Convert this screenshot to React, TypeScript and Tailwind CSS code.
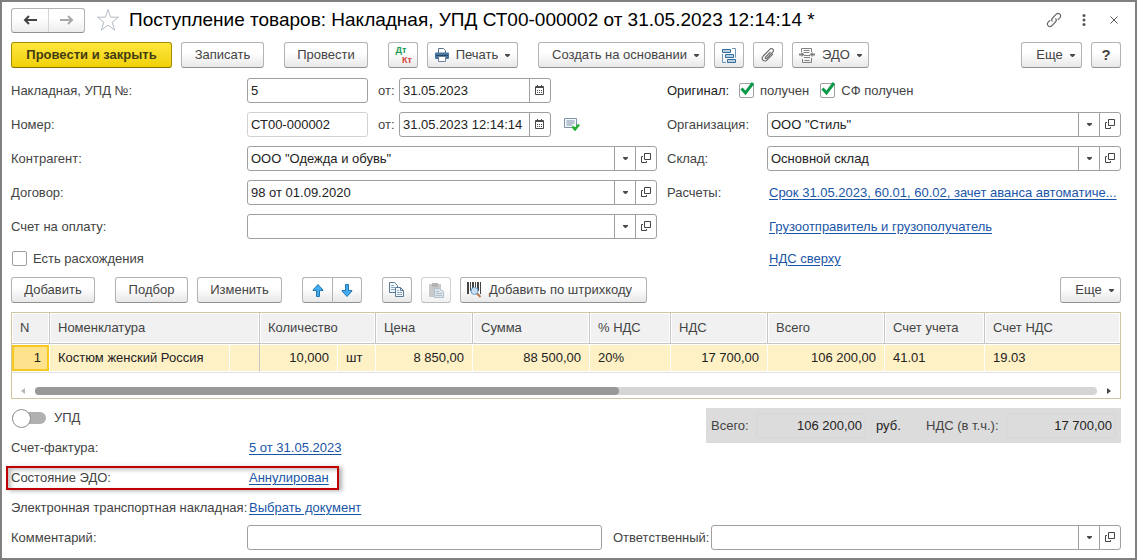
import { useState, type ReactNode } from 'react';
import { clsx } from 'clsx';

const LINK = 'text-[#1a56a8] underline underline-offset-2 whitespace-nowrap';

function Caret() {
  return (
    <svg width="5" height="3" viewBox="0 0 5 3" fill="#4a4a4a" aria-hidden="true" className="shrink-0">
      <path d="M0 0h5v1L3 3H2L0 1z" />
    </svg>
  );
}

function OpenIcon() {
  return (
    <svg width="10" height="10" viewBox="0 0 10 10" fill="none" stroke="#444" aria-hidden="true">
      <path d="M3.5 0.5h6v6h-6z M2 3.5H0.5v6h5V8" />
    </svg>
  );
}

function CalendarIcon() {
  return (
    <svg width="10" height="10" viewBox="0 0 10 10" fill="none" stroke="#4a4a4a" aria-hidden="true">
      <path d="M0.5 1.5h8v8h-8z M0 2.5h9" />
      <path d="M2.5 0v2 M6.5 0v2" />
      <path d="M2 5.5h1m1 0h1m1 0h1 M2 7.5h1m1 0h1m1 0h1" />
    </svg>
  );
}

function StarIcon() {
  return (
    <svg width="24" height="24" viewBox="0 0 24 24" fill="#fff" stroke="#b4bcc6" aria-hidden="true">
      <path d="M12 1.5l2.6 7.7h8l-6.4 4.9 2.4 7.9L12 17.2l-6.6 4.8 2.4-7.9L1.4 9.2h8z" />
    </svg>
  );
}

function NavArrow({ back }: { back?: boolean }) {
  return (
    <svg width="15" height="10" viewBox="0 0 15 10" fill="none" aria-hidden="true" stroke={back ? '#444' : '#a8a8a8'} strokeWidth="2">
      <path d={back ? 'M14 5H2 M6 1L2 5l4 4' : 'M1 5h12 M9 1l4 4-4 4'} />
    </svg>
  );
}

function LinkIcon() {
  return (
    <svg width="16" height="16" viewBox="0 0 16 16" fill="none" stroke="#666" strokeWidth="1.2" aria-hidden="true">
      <path d="M6.5 9.5C5.5 8.5 5.6 7 6.6 6l3.6-3.8c1.1-1 2.6-1 3.6 0s1 2.5 0 3.6l-2 2" />
      <path d="M9.5 6.5c1 1 .9 2.5-.1 3.5l-3.6 3.8c-1.1 1-2.6 1-3.6 0s-1-2.5 0-3.6l2-2" />
    </svg>
  );
}

function PrintIcon() {
  return (
    <svg width="14" height="14" viewBox="0 0 14 14" aria-hidden="true" className="shrink-0">
      <path d="M3.5 5V.5h5l2 2V5" fill="#fff" stroke="#5a6f86" />
      <path d="M1 4.5h12a1 1 0 011 1V10a1 1 0 01-1 1H1a1 1 0 01-1-1V5.5a1 1 0 011-1z" fill="#47759f" />
      <path d="M1 7.5h12" stroke="#24496d" />
      <path d="M3.5 8.5h7v5h-7z" fill="#fff" stroke="#6f8297" />
    </svg>
  );
}

function StructureIcon() {
  return (
    <svg width="14" height="15" viewBox="0 0 14 15" fill="none" stroke="#356d9a" aria-hidden="true">
      <path d="M.5 1.5h8v3h-8z M3.5 6.5h8v3h-8z M5.5 11.5h8v3h-8z" fill="#b6d1e6" />
      <path d="M10 .5h3.5v9 M.5 6v8.5H4" stroke="#6a95b8" />
    </svg>
  );
}

function ClipIcon() {
  return (
    <svg width="14" height="14" viewBox="0 0 14 14" fill="none" stroke="#666" strokeWidth="1.1" aria-hidden="true">
      <path d="M9.5 4L4.5 9.2c-.8.9.4 2 1.2 1.2l6-6.2c2-2.3-.8-4.8-2.9-2.9L2.2 8c-2.8 3.1 1 6.6 3.9 3.9l5.9-6" />
    </svg>
  );
}

function EdoIcon() {
  return (
    <svg width="16" height="15" viewBox="0 0 16 15" fill="none" stroke="#808080" aria-hidden="true" className="shrink-0">
      <path d="M2.5 4V.5h10V4 M3.5 11v3.5h9V10" />
      <path d="M4.5 2.5h6 M4.5 4.5h6 M5 7.5h6 M5 9.5h6 M5.5 12.5h5" />
      <path d="M0 6.5h4 M16 6.5h-4" strokeWidth="2" />
      <path d="M2.5 4v5l3-2.5z M13.5 4v5l-3-2.5z" fill="#808080" stroke="none" />
    </svg>
  );
}

function MoveArrow({ down }: { down?: boolean }) {
  return (
    <svg width="12" height="13" viewBox="0 0 12 13" fill="#41aaf0" stroke="#2477ad" aria-hidden="true">
      <path d={down ? 'M4.5.5h3v6H11v.5l-5 5.5L1 7v-.5h3.5z' : 'M4.5 12.5h3v-6H11V6L6 .5 1 6v.5h3.5z'} />
    </svg>
  );
}

function CopyIcon() {
  return (
    <svg width="16" height="16" viewBox="0 0 16 16" fill="#f3f8fc" stroke="#5b7893" aria-hidden="true">
      <path d="M.5.5h5l3 3v7h-8z" />
      <path d="M2 3.5h3 M2 5.5h4 M2 7.5h4" stroke="#8ea7bd" />
      <path d="M6.5 5.5h5l3 3v6h-8z" />
      <path d="M11.5 5.5v3h3" fill="none" />
      <path d="M8 8.5h2 M8 10.5h5 M8 12.5h5" stroke="#8ea7bd" />
    </svg>
  );
}

function PasteIcon() {
  return (
    <svg width="15" height="15" viewBox="0 0 15 15" aria-hidden="true">
      <path d="M0 1h12v13H0z" fill="#a6a6a6" />
      <path d="M3 0h6v4H3z" fill="#808080" />
      <path d="M5.5 5.5h5l4 3v6h-9z" fill="#c6d2dc" stroke="#7f97ab" />
      <path d="M7 8.5h3 M7 10.5h6 M7 12.5h6" stroke="#7f97ab" />
    </svg>
  );
}

function BarcodeIcon() {
  return (
    <svg width="15" height="16" viewBox="0 0 15 16" aria-hidden="true" className="shrink-0">
      <path d="M0 0h2v12H0z M3 0h1v9H3z M5 0h2v9H5z M8 0h1v9H8z M10 0h2v9h-2z M13 0h1v12h-1z" fill="#444" />
      <circle cx="7.5" cy="9" r="3.5" fill="#c7e0f6" stroke="#6a9dc9" />
      <path d="M10 11.5l3.5 3.5" stroke="#b9764a" strokeWidth="2" />
    </svg>
  );
}

function PostedIcon() {
  return (
    <svg width="16" height="13" viewBox="0 0 16 13" fill="none" aria-hidden="true">
      <path d="M.5.5h12v9H.5z" fill="#f4f8fb" stroke="#7c93aa" />
      <path d="M2.5 3h8 M2.5 5h8 M2.5 7h6" stroke="#7c93aa" />
      <path d="M8.5 8.5l2.5 3 4-5" stroke="#25b034" strokeWidth="2.5" />
    </svg>
  );
}

type ButtonProps = { className?: string; label?: string; primary?: boolean; disabled?: boolean; children: ReactNode };

function Button({ className, label, primary, disabled, children }: ButtonProps) {
  return (
    <button
      type="button"
      aria-label={label}
      disabled={disabled}
      className={clsx(
        'flex h-[26px] shrink-0 items-center justify-center rounded-[3px] border whitespace-nowrap',
        primary
          ? 'border-[#a98d00] border-b-[#857000] bg-linear-to-b from-[#ffe83a] to-[#f0d000] font-bold text-[#443c10]'
          : 'border-[#b3b3b3] border-b-[#919191] bg-linear-to-b from-white from-40% to-[#e8e8e8] text-[#444]',
        disabled && 'opacity-60',
        className,
      )}
    >
      {children}
    </button>
  );
}

const BOX = 'flex h-[25px] min-w-0 overflow-hidden rounded-[3px] border border-[#a0a0a0] bg-white';
const CELL = 'flex w-[21px] shrink-0 items-center justify-center border-l border-[#a0a0a0] pb-px';

function Combo({ id, value = '' }: { id: string; value?: string }) {
  return (
    <div className={clsx(BOX, 'flex-1')}>
      <select id={id} defaultValue={value} className="min-w-0 flex-1 appearance-none bg-transparent px-[3px] text-[#222] outline-none">
        <option value={value}>{value}</option>
      </select>
      <span className={clsx(CELL, 'pointer-events-none')}>
        <Caret />
      </span>
      <button type="button" aria-label="Открыть" className={CELL}>
        <OpenIcon />
      </button>
    </div>
  );
}

function DateBox({ id, value }: { id: string; value: string }) {
  return (
    <div className={clsx(BOX, 'w-[152px] shrink-0')}>
      <input id={id} defaultValue={value} className="min-w-0 flex-1 px-[3px] text-[#222] outline-none" />
      <button type="button" aria-label="Выбрать дату" className={CELL}>
        <CalendarIcon />
      </button>
    </div>
  );
}

function Check({ label, checked }: { label: string; checked?: boolean }) {
  const [on, setOn] = useState(!!checked);
  return (
    <label className="flex items-center gap-[6px] whitespace-nowrap">
      <span className="relative flex">
        <input
          type="checkbox"
          checked={on}
          onChange={() => setOn(!on)}
          className="size-[15px] appearance-none rounded-[2px] border border-[#a0a0a0] bg-white"
        />
        {on && (
          <svg width="15" height="14" viewBox="0 0 15 14" fill="none" stroke="#0a9a4a" strokeWidth="3" className="pointer-events-none absolute -top-px left-px">
            <path d="M1.5 6.5L5.5 11 13 1" />
          </svg>
        )}
      </span>
      {label}
    </label>
  );
}

function Row({ label, htmlFor, narrow, children }: { label: string; htmlFor?: string; narrow?: boolean; children: ReactNode }) {
  const width = narrow ? 'w-[100px]' : 'w-[236px]';
  return (
    <div className="flex h-[25px] items-center">
      {htmlFor ? (
        <label htmlFor={htmlFor} className={clsx('shrink-0 whitespace-nowrap', width)}>{label}</label>
      ) : (
        <span className={clsx('shrink-0 whitespace-nowrap', width)}>{label}</span>
      )}
      {children}
    </div>
  );
}

const headers = [
  { title: 'N' },
  { title: 'Номенклатура', span: 2 },
  { title: 'Количество', span: 2 },
  { title: 'Цена' },
  { title: 'Сумма' },
  { title: '% НДС' },
  { title: 'НДС' },
  { title: 'Всего' },
  { title: 'Счет учета' },
  { title: 'Счет НДС' },
];

const cells = [
  { text: 'Костюм женский Россия' },
  { text: '', edge: true },
  { text: '10,000', right: true },
  { text: 'шт' },
  { text: '8 850,00', right: true },
  { text: '88 500,00', right: true },
  { text: '20%' },
  { text: '17 700,00', right: true },
  { text: '106 200,00', right: true },
  { text: '41.01' },
  { text: '19.03' },
];

function GoodsTable() {
  return (
    <div className="mt-[9px] border border-[#cfc7a4] bg-white">
      <table className="w-full table-fixed border-separate border-spacing-0">
        <colgroup>
          <col className="w-[38px]" />
          <col className="w-[180px]" />
          <col className="w-[30px]" />
          <col className="w-[78px]" />
          <col className="w-[38px]" />
          <col className="w-[97px]" />
          <col className="w-[117px]" />
          <col className="w-[81px]" />
          <col className="w-[97px]" />
          <col className="w-[117px]" />
          <col className="w-[100px]" />
          <col />
        </colgroup>
        <thead>
          <tr>
            {headers.map((h) => (
              <th
                key={h.title}
                colSpan={h.span}
                className="h-[31px] border-r border-b border-[#c6c6c6] bg-[#f1f1f1] px-2 text-left font-normal shadow-[inset_0_0_0_1px_#fff] last:border-r-0"
              >
                {h.title}
              </th>
            ))}
          </tr>
        </thead>
        <tbody className="text-[#222]">
          <tr>
            <td className="h-7 border-y border-r border-white bg-[#ffe28c] px-2 text-right shadow-[inset_0_0_0_2px_#f7c81e]">1</td>
            {cells.map((c, i) => (
              <td
                key={i}
                className={clsx(
                  'h-7 border-y border-r border-white bg-[#fff1c6] px-2 whitespace-nowrap last:border-r-0',
                  c.right && 'text-right',
                  c.edge && 'border-r-[#c6c6c6]',
                )}
              >
                {c.text}
              </td>
            ))}
          </tr>
        </tbody>
      </table>
      <div className="flex items-center gap-[10px] border-t border-[#e2e2e2] px-[9px] pt-[14px] pb-[3px]">
        <svg width="4" height="6" viewBox="0 0 4 6" fill="#b5b5b5" aria-hidden="true"><path d="M4 0v6L0 3z" /></svg>
        <div className="h-2 flex-1 rounded-full bg-[#d5d5d5]">
          <div className="h-2 w-[55%] rounded-full bg-[#999]" />
        </div>
        <svg width="4" height="6" viewBox="0 0 4 6" fill="#444" aria-hidden="true"><path d="M0 0v6l4-3z" /></svg>
      </div>
    </div>
  );
}

export default function App() {
  const [upd, setUpd] = useState(false);

  return (
    <div className="min-h-screen border-2 border-[#808080] bg-white pt-[6px] pr-[14px] pb-2 pl-[9px] font-['Liberation_Sans',Arial,sans-serif] text-[13px] leading-4 text-[#444]">
      <header className="flex h-6 items-center">
        <div className="flex h-[25px] shrink-0 rounded-[3px] border border-[#b3b3b3] border-b-[#919191] bg-linear-to-b from-white from-40% to-[#ececec]">
          <button type="button" aria-label="Назад" className="flex w-9 items-center justify-center"><NavArrow back /></button>
          <button type="button" aria-label="Вперед" className="flex w-9 items-center justify-center border-l border-[#d5d5d5]"><NavArrow /></button>
        </div>
        <button type="button" aria-label="В избранное" className="ml-[11px]"><StarIcon /></button>
        <h1 className="ml-[9px] flex-1 text-[19px] leading-6 whitespace-nowrap text-black">
          Поступление товаров: Накладная, УПД СТ00-000002 от 31.05.2023 12:14:14 *
        </h1>
        <div className="flex items-center pr-[3px]">
          <button type="button" aria-label="Ссылка"><LinkIcon /></button>
          <button type="button" aria-label="Меню" className="ml-5">
            <svg width="4" height="12" viewBox="0 0 4 12" fill="#555">
              <circle cx="2" cy="1.5" r="1.5" />
              <circle cx="2" cy="6" r="1.5" />
              <circle cx="2" cy="10.5" r="1.5" />
            </svg>
          </button>
          <button type="button" aria-label="Закрыть" className="ml-6">
            <svg width="8" height="8" viewBox="0 0 8 8" stroke="#555"><path d="M.5.5l7 7 M7.5.5l-7 7" /></svg>
          </button>
        </div>
      </header>

      <div className="mt-[10px] flex">
        <Button primary className="w-[161px]">Провести и закрыть</Button>
        <Button className="ml-[9px] w-[83px]">Записать</Button>
        <Button className="ml-5 w-[84px]">Провести</Button>
        <Button label="Дт Кт" className="ml-5 w-[30px] flex-col text-[9px] leading-[10px] font-bold">
          <span className="pr-1 text-[#159a50]">Дт</span>
          <span className="pl-2 text-[#d8423c]">Кт</span>
        </Button>
        <Button className="ml-[9px] w-[91px] gap-[7px]"><PrintIcon />Печать<Caret /></Button>
        <Button className="ml-5 w-[167px] gap-[7px] pl-2">Создать на основании<Caret /></Button>
        <Button label="Связанные документы" className="ml-[9px] w-[30px]"><StructureIcon /></Button>
        <Button label="Файлы" className="ml-[9px] w-[30px]"><ClipIcon /></Button>
        <Button className="ml-[9px] w-[77px] gap-[7px]"><EdoIcon />ЭДО<Caret /></Button>
        <Button className="ml-auto w-[61px] gap-[7px] pl-2">Еще<Caret /></Button>
        <Button label="Справка" className="ml-[9px] w-[30px] text-[15px] font-bold text-[#222]">?</Button>
      </div>

      <div className="mt-[10px] grid grid-cols-[646fr_454fr] gap-x-[10px]">
        <div className="flex min-w-0 flex-col gap-[9px]">
          <Row label="Накладная, УПД №:" htmlFor="invoice">
            <input id="invoice" defaultValue="5" className={clsx(BOX, 'w-[121px] px-[3px] text-[#222]')} />
            <label htmlFor="invoice-date" className="w-[31px] pl-[10px]">от:</label>
            <DateBox id="invoice-date" value="31.05.2023" />
          </Row>
          <Row label="Номер:" htmlFor="number">
            <input id="number" readOnly defaultValue="СТ00-000002" className="h-[25px] w-[121px] rounded-[3px] border border-[#d2d2d2] px-[3px] text-[#222]" />
            <label htmlFor="number-date" className="w-[31px] pl-[10px]">от:</label>
            <DateBox id="number-date" value="31.05.2023 12:14:14" />
            <button type="button" aria-label="Проведен" className="ml-[13px]"><PostedIcon /></button>
          </Row>
          <Row label="Контрагент:" htmlFor="partner"><Combo id="partner" value={'ООО "Одежда и обувь"'} /></Row>
          <Row label="Договор:" htmlFor="contract"><Combo id="contract" value="98 от 01.09.2020" /></Row>
          <Row label="Счет на оплату:" htmlFor="bill"><Combo id="bill" /></Row>
          <div className="flex h-[21px] items-center pl-px"><Check label="Есть расхождения" /></div>
        </div>

        <div className="flex min-w-0 flex-col gap-[9px]">
          <div className="flex h-[25px] items-center">
            <span className="w-[72px] text-[#222]">Оригинал:</span>
            <div className="flex gap-[11px]">
              <Check label="получен" checked />
              <Check label="СФ получен" checked />
            </div>
          </div>
          <Row narrow label="Организация:" htmlFor="org"><Combo id="org" value={'ООО "Стиль"'} /></Row>
          <Row narrow label="Склад:" htmlFor="store"><Combo id="store" value="Основной склад" /></Row>
          <Row narrow label="Расчеты:">
            <a href="#terms" className={clsx(LINK, 'ml-[2px]')}>Срок 31.05.2023, 60.01, 60.02, зачет аванса автоматиче...</a>
          </Row>
          <div className="flex h-[25px] items-center pl-[102px]">
            <a href="#consignee" className={LINK}>Грузоотправитель и грузополучатель</a>
          </div>
          <div className="flex h-[21px] items-center pl-[102px]">
            <a href="#vat" className={LINK}>НДС сверху</a>
          </div>
        </div>
      </div>

      <div className="mt-2 flex">
        <Button className="w-[84px]">Добавить</Button>
        <Button className="ml-5 w-[73px]">Подбор</Button>
        <Button className="ml-[9px] w-[85px]">Изменить</Button>
        <Button label="Вверх" className="ml-5 w-[30px] rounded-r-none border-r-0"><MoveArrow /></Button>
        <Button label="Вниз" className="w-[30px] rounded-l-none"><MoveArrow down /></Button>
        <Button label="Копировать" className="ml-5 w-[30px]"><CopyIcon /></Button>
        <Button label="Вставить" disabled className="ml-[9px] w-[30px]"><PasteIcon /></Button>
        <Button className="ml-[9px] w-[187px] gap-[7px] pr-2">
          <BarcodeIcon />Добавить по штрихкоду
        </Button>
        <Button className="ml-auto w-[61px] gap-[7px] pl-2">Еще<Caret /></Button>
      </div>

      <GoodsTable />

      <div className="flex items-start justify-between">
        <div className="mt-1">
          <label className="flex h-[30px] items-center gap-2 pl-px">
            <input
              type="checkbox"
              role="switch"
              checked={upd}
              onChange={() => setUpd(!upd)}
              className="flex h-3 w-[34px] appearance-none items-center rounded-full bg-[#b0b0b0] before:size-[19px] before:shrink-0 before:rounded-full before:border before:border-[#8e8e8e] before:bg-white checked:bg-[#4aa564] checked:before:ml-[15px]"
            />
            УПД
          </label>
          <div className="flex h-[30px] items-center">
            <span className="w-[238px]">Счет-фактура:</span>
            <a href="#factura" className={LINK}>5 от 31.05.2023</a>
          </div>
          <div className="relative flex h-[30px] items-center">
            <span className="w-[238px]">Состояние ЭДО:</span>
            <a href="#edo" className={LINK}>Аннулирован</a>
            {/* red highlight frame over the row */}
            <span className="pointer-events-none absolute inset-y-[3px] -left-[5px] w-[333px] border-2 border-[#c00000] shadow-[3px_1px_4px_rgba(0,0,0,0.3),inset_3px_2px_4px_rgba(0,0,0,0.25)]" />
          </div>
          <div className="flex h-[30px] items-center">
            <span className="w-[238px] whitespace-nowrap">Электронная транспортная накладная:</span>
            <a href="#waybill" className={LINK}>Выбрать документ</a>
          </div>
        </div>

        <div className="mt-[9px] flex h-[35px] w-[415px] items-center bg-[#dcdcdc] px-[5px]">
          <label htmlFor="total" className="w-[45px]">Всего:</label>
          <input id="total" readOnly defaultValue="106 200,00" className="h-[25px] w-[110px] rounded-[3px] border border-[#d6d6d6] px-[3px] text-right text-[#222]" />
          <span className="ml-[10px] w-[50px] text-[#222]">руб.</span>
          <label htmlFor="total-vat" className="flex-1">НДС (в т.ч.):</label>
          <input id="total-vat" readOnly defaultValue="17 700,00" className="h-[25px] w-[110px] rounded-[3px] border border-[#d6d6d6] px-[3px] text-right text-[#222]" />
        </div>
      </div>

      <div className="mt-[2px] grid grid-cols-[591fr_519fr]">
        <div className="flex items-center">
          <label htmlFor="comment" className="w-[236px] shrink-0">Комментарий:</label>
          <input id="comment" className={clsx(BOX, 'flex-1 px-[3px]')} />
        </div>
        <div className="flex items-center">
          <label htmlFor="responsible" className="w-[109px] shrink-0 pl-[11px]">Ответственный:</label>
          <Combo id="responsible" />
        </div>
      </div>
    </div>
  );
}
